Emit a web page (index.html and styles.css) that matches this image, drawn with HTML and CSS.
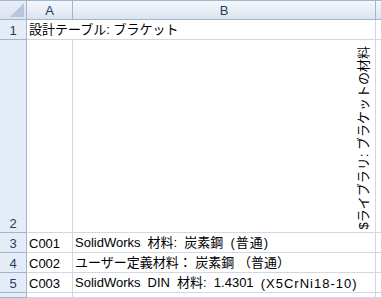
FILE: index.html
```html
<!DOCTYPE html>
<html lang="ja">
<head>
<meta charset="utf-8">
<title>設計テーブル</title>
<link rel="stylesheet" href="styles.css">
</head>
<body>
<div class="sheet">
  <div class="corner"><span class="corner-mark"></span></div>
  <div class="col-head">A</div>
  <div class="col-head">B</div>
  <div class="col-head col-rest"></div>

  <div class="row-head">1</div>
  <div class="cell span-cell">設計テーブル: ブラケット</div>
  <div class="cell cell-rest"></div>

  <div class="row-head">2</div>
  <div class="cell"></div>
  <div class="cell rotated-cell"><span class="rotated">$ライブラリ: ブラケットの材料</span></div>
  <div class="cell cell-rest"></div>

  <div class="row-head">3</div>
  <div class="cell">C001</div>
  <div class="cell mixed">SolidWorks 材料: 炭素鋼 <span class="paren">(普通)</span></div>
  <div class="cell cell-rest"></div>

  <div class="row-head">4</div>
  <div class="cell">C002</div>
  <div class="cell">ユーザー定義材料： 炭素鋼 （普通）</div>
  <div class="cell cell-rest"></div>

  <div class="row-head">5</div>
  <div class="cell">C003</div>
  <div class="cell mixed">SolidWorks DIN 材料: 1.4301 <span class="paren">(X5CrNi18-10)</span></div>
  <div class="cell cell-rest"></div>

  <div class="row-head"></div>
  <div class="cell"></div>
  <div class="cell"></div>
  <div class="cell cell-rest"></div>
</div>
</body>
</html>
```
FILE: styles.css
```css
html, body {
  margin: 0;
  padding: 0;
  background: #ffffff;
  overflow: hidden;
}

.sheet {
  display: grid;
  grid-template-columns: 27px 46px 303px 1fr;
  grid-template-rows: 20px 20px 193px 20px 20px 20px 5px;
  width: 381px;
  height: 298px;
  font-family: "Liberation Sans", "Noto Sans CJK JP", sans-serif;
  font-size: 13px;
  color: #000;
}

.sheet > div {
  box-sizing: border-box;
}

/* select-all corner */
.corner {
  background: linear-gradient(#e9eef6, #dbe3ee);
  border-right: 1px solid #9eb6ce;
  border-bottom: 1px solid #9eb6ce;
  border-top: 1px solid #9eb6ce;
  display: flex;
  align-items: flex-end;
  justify-content: flex-end;
  padding: 0 2px 2px 0;
}

.corner-mark {
  width: 0;
  height: 0;
  border-left: 14px solid transparent;
  border-bottom: 14px solid #b7c7db;
}

/* column letters */
.col-head {
  background: linear-gradient(#f5f8fc 0%, #e8edf5 55%, #dbe3ee 100%);
  border-top: 1px solid #9eb6ce;
  border-right: 1px solid #9eb6ce;
  border-bottom: 1px solid #9eb6ce;
  display: flex;
  align-items: center;
  justify-content: center;
  color: #1f3b5e;
  font-size: 13px;
  padding-top: 1px;
}

.col-rest {
  border-right: none;
}

/* row numbers */
.row-head {
  background: #e4ecf7;
  border-right: 1px solid #9eb6ce;
  border-bottom: 1px solid #9eb6ce;
  display: flex;
  align-items: flex-end;
  justify-content: center;
  color: #1f3b5e;
  padding-bottom: 1px;
}

.cell {
  border-right: 1px solid #d0d7e5;
  border-bottom: 1px solid #d0d7e5;
  display: flex;
  align-items: flex-end;
  padding: 0 0 1px 2px;
  white-space: pre;
  overflow: visible;
}

.mixed {
  word-spacing: 3.5px;
}

.paren {
  letter-spacing: 1px;
}

.span-cell {
  grid-column: 2 / 4;
}

.cell-rest {
  border-right: none;
}

/* B2 holds the library path turned 90 degrees */
.rotated-cell {
  justify-content: flex-end;
  padding: 0 4px 3px 0;
}

.rotated {
  writing-mode: vertical-rl;
  text-orientation: sideways;
  transform: rotate(180deg);
  font-size: 13px;
  line-height: 15px;
}
```
